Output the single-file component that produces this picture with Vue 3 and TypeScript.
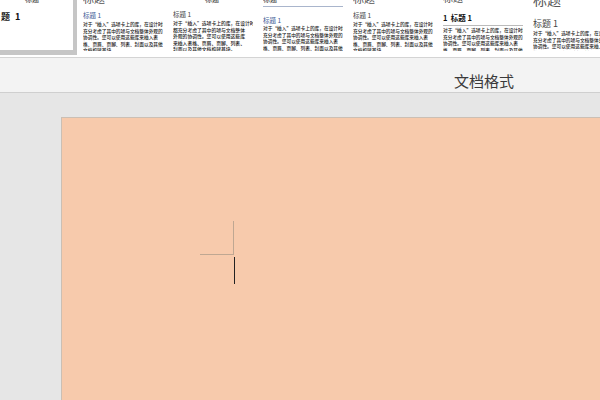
<script setup lang="ts">
interface Tile {
  cls: string
  title: string
  heading: string
  lines: string[]
}
const wide = [
  '对于“插入”选项卡上的库，在设计时都',
  '充分考虑了其中的项与文档整体外观的',
  '协调性。您可以使用这些库来插入表',
  '格、页眉、页脚、列表、封面以及其他',
  '文档构建基块。'
]
const narrow = [
  '对于“插入”选项卡上的库，在设计时',
  '都充分考虑了其中的项与文档整体',
  '外观的协调性。您可以使用这些库',
  '来插入表格、页眉、页脚、列表、',
  '封面以及其他文档构建基块。'
]
const tiles: Tile[] = [
  { cls: 't2', title: '标题', heading: '标题 1', lines: wide },
  { cls: 't3', title: '标题', heading: '标题 1', lines: narrow },
  { cls: 't4', title: '标题', heading: '标题 1', lines: wide },
  { cls: 't5', title: '标题', heading: '标题 1', lines: wide },
  { cls: 't6', title: '标题', heading: '1  标题 1', lines: wide },
  { cls: 't7', title: '标题', heading: '标题 1', lines: wide }
]
</script>

<template>
  <div class="app">
    <div class="gallery">
      <div class="first">
        <div class="first-title">标题</div>
        <div class="first-heading">题 1</div>
      </div>
      <div v-for="t in tiles" :key="t.cls" class="tile" :class="t.cls">
        <div class="title">{{ t.title }}</div>
        <div class="heading">{{ t.heading }}</div>
        <div v-for="(l, i) in t.lines" :key="i" class="line">{{ l }}</div>
      </div>
    </div>
    <div class="band"><span class="band-text">文档格式</span></div>
    <div class="workspace">
      <div class="page">
        <span class="mark mark-v"></span>
        <span class="mark mark-h"></span>
        <span class="caret"></span>
      </div>
    </div>
  </div>
</template>

<style>
html, body { margin: 0; padding: 0; background: #e6e6e6; }
</style>

<style scoped>
.app {
  width: 600px;
  height: 400px;
  overflow: hidden;
  display: flex;
  flex-direction: column;
  font-family: "Noto Sans CJK SC", "Liberation Sans", sans-serif;
  background: #e6e6e6;
}
.gallery {
  height: 57px;
  flex: none;
  display: flex;
  background: #fff;
  border-bottom: 1px solid #d4d4d4;
  overflow: hidden;
}
.first {
  width: 73px;
  height: 50px;
  flex: none;
  background: #fff;
  border-right: 4px solid #c6c6c6;
  border-bottom: 5px solid #c6c6c6;
  margin-right: 6px;
  overflow: hidden;
  color: #222;
}
.first-title {
  font-size: 7px;
  line-height: 9px;
  margin: -5px 0 0 25px;
  color: #333;
}
.first-heading {
  font-size: 9px;
  font-weight: 700;
  line-height: 12px;
  margin: 7px 0 0 1px;
  word-spacing: 3px;
  color: #111;
}
.tile {
  width: 80px;
  height: 51px;
  flex: none;
  margin-right: 10px;
  overflow: hidden;
}
.title {
  font-size: 11px;
  line-height: 14px;
  color: #555;
  margin-top: -9px;
  white-space: nowrap;
}
.heading {
  font-size: 6.5px;
  line-height: 10px;
  color: #444;
  margin-top: 5px;
  margin-bottom: 1px;
  white-space: pre;
}
.line {
  font-size: 4.7px;
  font-weight: 500;
  line-height: 6.6px;
  white-space: nowrap;
  color: #1a1a1a;
}
.t2 .heading { color: #3d5a94; }
.t3 .title { font-size: 7px; line-height: 9px; margin-top: -5px; padding-left: 32px; color: #333; }
.t3 .heading { margin-bottom: 1px; }
.t3 .line { font-size: 4.8px; }
.t4 .title {
  font-size: 7px;
  line-height: 9px;
  margin-top: -5px;
  padding-bottom: 2px;
  border-bottom: 1px solid #a9b5cc;
  color: #333;
}
.t4 .heading { color: #3d5a94; margin-top: 8px; margin-bottom: 0; }
.t6 .title { font-size: 10px; line-height: 13px; }
.t6 .heading {
  font-weight: 700;
  color: #111;
  font-size: 7.5px;
  margin-top: 9px;
  padding-bottom: 2px;
  border-bottom: 1px solid #bbb;
  margin-bottom: 1px;
}
.t7 .title { font-size: 14px; line-height: 18px; margin-top: -10px; color: #555; }
.t7 .heading { font-size: 9px; margin-top: 11px; margin-bottom: 1px; }
.band {
  height: 35px;
  flex: none;
  box-sizing: border-box;
  background: #f3f3f3;
  border-bottom: 1px solid #cfcfcf;
  display: flex;
  align-items: flex-end;
  padding: 0 0 1px 454px;
}
.band-text {
  font-size: 15px;
  line-height: 20px;
  color: #3a3a3a;
  white-space: nowrap;
}
.workspace {
  flex: 1;
  padding: 24px 0 0 61px;
  min-height: 0;
}
.page {
  position: relative;
  width: 560px;
  height: 320px;
  box-sizing: border-box;
  background: #f7caac;
  border-top: 1px solid #cbbfb4;
  border-left: 1px solid #cbbfb4;
}
.mark { position: absolute; background: #bfa792; }
.mark-v { left: 171px; top: 103px; width: 1px; height: 34px; }
.mark-h { left: 138px; top: 136px; width: 34px; height: 1px; }
.caret { position: absolute; left: 172px; top: 139px; width: 1px; height: 27px; background: #222; }
</style>
